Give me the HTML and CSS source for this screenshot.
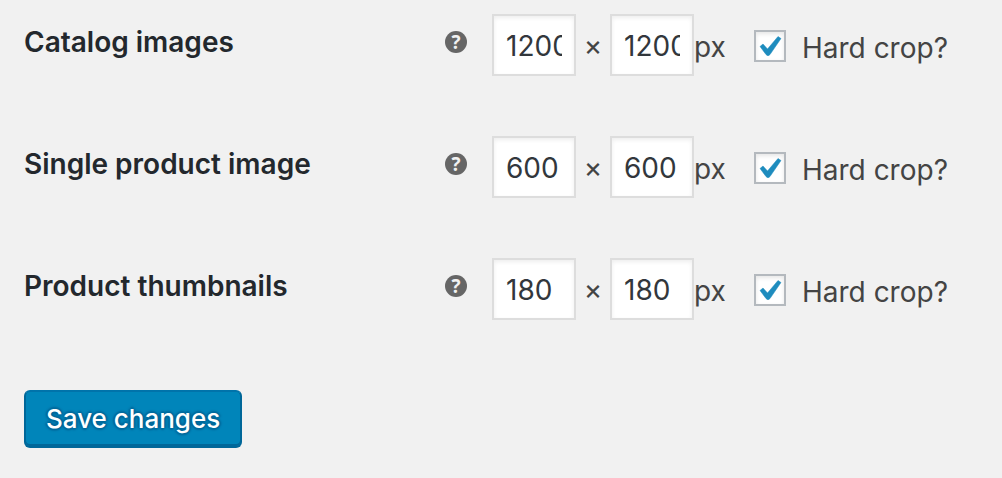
FILE: index.html
```
<!DOCTYPE html>
<html lang="en">
<head>
    <meta charset="UTF-8">
    <meta name="viewport" content="width=device-width, initial-scale=1.0">
    <title>Product Images</title>
    <link rel="stylesheet" href="styles.css">
</head>
<body>
    <form class="settings-form">
        <div class="setting-row">
            <div class="setting-title">
                <label for="catalog_width">Catalog images</label>
                <button type="button" class="help-tip">?</button>
            </div>
            <div class="setting-fields">
                <input type="text" class="size-input" id="catalog_width" name="catalog_width" value="1200">
                <span class="times">×</span>
                <input type="text" class="size-input" name="catalog_height" value="1200" aria-label="Catalog height">
                <span class="unit">px</span>
                <label class="crop-label">
                    <input type="checkbox" class="crop-check" name="catalog_crop" checked>
                    Hard crop?
                </label>
            </div>
        </div>

        <div class="setting-row">
            <div class="setting-title">
                <label for="single_width">Single product image</label>
                <button type="button" class="help-tip">?</button>
            </div>
            <div class="setting-fields">
                <input type="text" class="size-input" id="single_width" name="single_width" value="600">
                <span class="times">×</span>
                <input type="text" class="size-input" name="single_height" value="600" aria-label="Single height">
                <span class="unit">px</span>
                <label class="crop-label">
                    <input type="checkbox" class="crop-check" name="single_crop" checked>
                    Hard crop?
                </label>
            </div>
        </div>

        <div class="setting-row">
            <div class="setting-title">
                <label for="thumbnail_width">Product thumbnails</label>
                <button type="button" class="help-tip">?</button>
            </div>
            <div class="setting-fields">
                <input type="text" class="size-input" id="thumbnail_width" name="thumbnail_width" value="180">
                <span class="times">×</span>
                <input type="text" class="size-input" name="thumbnail_height" value="180" aria-label="Thumbnail height">
                <span class="unit">px</span>
                <label class="crop-label">
                    <input type="checkbox" class="crop-check" name="thumbnail_crop" checked>
                    Hard crop?
                </label>
            </div>
        </div>

        <button type="submit" class="save-btn">Save changes</button>
    </form>
</body>
</html>
```
FILE: styles.css
```
* {
    box-sizing: border-box;
}
body {
    margin: 0;
    padding: 14px 24px 30px;
    background: #f1f1f1;
    color: #444;
    font-family: Inter, "Liberation Sans", sans-serif;
    font-size: 28px;
    line-height: 36px;
}
.setting-row {
    display: flex;
    gap: 25px;
    margin-bottom: 60px;
}
.setting-title {
    display: flex;
    justify-content: space-between;
    align-items: center;
    width: 443px;
    height: 56px;
    color: #23282d;
    font-weight: 600;
}
.help-tip {
    width: 22px;
    height: 22px;
    padding: 0;
    border: none;
    border-radius: 50%;
    background: #666;
    color: #f1f1f1;
    font: bold 19px/22px "Open Sans", sans-serif;
    text-align: center;
    cursor: help;
}
.setting-fields {
    display: flex;
    align-items: center;
}
.size-input {
    width: 84px;
    height: 62px;
    padding: 6px 12px 4px;
    border: 2px solid #ddd;
    border-radius: 0;
    background: #fff;
    box-shadow: inset 0 2px 4px rgba(0, 0, 0, 0.07);
    color: #32373c;
    font: inherit;
}
.times {
    width: 34px;
    text-align: center;
}
.unit {
    width: 60px;
    padding-top: 4px;
}
.crop-label {
    display: flex;
    align-items: center;
    gap: 16px;
    padding-top: 6px;
}
.crop-check {
    appearance: none;
    width: 32px;
    height: 32px;
    margin: 0 0 4px;
    border: 2px solid #b4b9be;
    background: #fff;
    box-shadow: inset 0 2px 4px rgba(0, 0, 0, 0.1);
}
.crop-check:checked {
    background: #fff url("data:image/svg+xml,%3Csvg xmlns='http://www.w3.org/2000/svg' viewBox='0 0 28 28'%3E%3Cpath d='M4 14.500L7 12L11.500 17L22 4.500L25 6.500L14 22.500Q12 25 10 22.500Z' fill='%231e8cbe' stroke='%231e8cbe' stroke-width='.5' stroke-linejoin='round'/%3E%3C/svg%3E") center / 28px 28px no-repeat;
}
.save-btn {
    display: block;
    height: 58px;
    margin-top: 70px;
    padding: 0 20px;
    border: 2px solid #006799;
    border-color: #0073aa #006799 #006799;
    border-radius: 6px;
    background: #0085ba;
    box-shadow: inset 0 -2px 0 #006799;
    color: #fff;
    font: inherit;
    font-size: 26px;
    font-weight: 500;
    text-shadow: 0 -2px 2px #006799, 2px 0 2px #006799, 0 2px 2px #006799, -2px 0 2px #006799;
    cursor: pointer;
}
```
